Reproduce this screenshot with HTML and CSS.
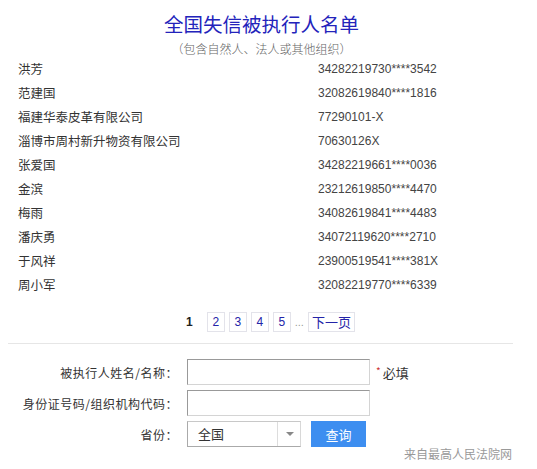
FILE: index.html
```html
<!DOCTYPE html>
<html lang="zh-CN">
<head>
  <meta charset="UTF-8" />
  <title>全国失信被执行人名单</title>
  <link rel="stylesheet" href="styles.css">
</head>
<body>
  <div class="page">
    <h1 class="title">全国失信被执行人名单</h1>
    <div class="subtitle">（包含自然人、法人或其他组织）</div>

    <!-- 名单列表 -->
    <ul class="list">
      <li><span class="name">洪芳</span><span class="code">34282219730****3542</span></li>
      <li><span class="name">范建国</span><span class="code">32082619840****1816</span></li>
      <li><span class="name">福建华泰皮革有限公司</span><span class="code">77290101-X</span></li>
      <li><span class="name">淄博市周村新升物资有限公司</span><span class="code">70630126X</span></li>
      <li><span class="name">张爱国</span><span class="code">34282219661****0036</span></li>
      <li><span class="name">金滨</span><span class="code">23212619850****4470</span></li>
      <li><span class="name">梅雨</span><span class="code">34082619841****4483</span></li>
      <li><span class="name">潘庆勇</span><span class="code">34072119620****2710</span></li>
      <li><span class="name">于风祥</span><span class="code">23900519541****381X</span></li>
      <li><span class="name">周小军</span><span class="code">32082219770****6339</span></li>
    </ul>

    <!-- 分页 -->
    <div class="pager">
      <span class="current">1</span>
      <a href="#" class="page-link">2</a>
      <a href="#" class="page-link">3</a>
      <a href="#" class="page-link">4</a>
      <a href="#" class="page-link">5</a>
      <span class="dots">...</span>
      <a href="#" class="page-link next">下一页</a>
    </div>

    <div class="divider"></div>

    <!-- 查询表单 -->
    <form class="search">
      <div class="row">
        <label class="label">被执行人姓名/名称：</label>
        <input type="text" class="field" />
        <span class="required"><i>*</i>必填</span>
      </div>
      <div class="row">
        <label class="label">身份证号码/组织机构代码：</label>
        <input type="text" class="field" />
      </div>
      <div class="row">
        <label class="label">省份：</label>
        <div class="select">
          <span class="select-value">全国</span>
          <span class="select-arrow"></span>
        </div>
        <button type="button" class="btn">查询</button>
      </div>
    </form>

    <div class="source">来自最高人民法院网</div>
  </div>
</body>
</html>
```

FILE: styles.css
```css
* {
  margin: 0;
  padding: 0;
  box-sizing: border-box;
}

body {
  font-family: "Liberation Sans", "Noto Sans CJK SC", sans-serif;
  background: #fff;
  color: #333;
}

.page {
  width: 537px;
}

.title {
  font-family: "Noto Sans CJK SC", sans-serif;
  font-size: 19.5px;
  font-weight: normal;
  color: #2323bb;
  text-align: center;
  line-height: 24px;
  margin-top: 12px;
  padding-right: 14px;
}

.subtitle {
  font-family: "Noto Sans CJK SC", sans-serif;
  font-size: 12px;
  font-weight: 300;
  color: #666;
  text-align: center;
  line-height: 16px;
  margin-top: 5px;
  padding-right: 14px;
}

.list {
  list-style: none;
}

.list li {
  display: flex;
  height: 24px;
  line-height: 24px;
  font-size: 12.5px;
}

.name {
  font-family: "Noto Sans CJK SC", sans-serif;
  width: 318px;
  padding-left: 18px;
  color: #333;
}

.code {
  font-size: 12px;
  color: #444;
}

.pager {
  display: flex;
  justify-content: center;
  align-items: center;
  gap: 4px;
  margin-top: 15px;
  height: 20px;
  font-size: 12px;
  padding-left: 4px;
}

.current {
  font-weight: bold;
  color: #222;
  margin-right: 10px;
}

.page-link {
  display: inline-block;
  min-width: 18px;
  height: 20px;
  line-height: 18px;
  padding: 0 3px;
  border: 1px solid #e3e3ea;
  color: #2424a8;
  text-decoration: none;
  text-align: center;
}

.next {
  font-family: "Noto Sans CJK SC", sans-serif;
  font-size: 13px;
  padding: 0 3px;
}

.dots {
  color: #999;
  font-size: 11px;
}

.divider {
  height: 1px;
  background: #e6e6e6;
  margin: 11px 24px 0 8px;
}

.search {
  margin-top: 15px;
}

.row {
  display: flex;
  align-items: center;
  margin-bottom: 5px;
}

.label {
  font-family: "Noto Sans CJK SC", sans-serif;
  width: 178px;
  text-align: right;
  font-size: 12px;
  letter-spacing: 0.5px;
  color: #333;
  margin-right: 9px;
}

.field {
  width: 183px;
  height: 26px;
  border: 1px solid;
  border-color: #999 #d4d4d4 #d4d4d4 #999;
  outline: none;
}

.required {
  font-family: "Noto Sans CJK SC", sans-serif;
  font-size: 13px;
  margin-left: 6px;
  color: #333;
}

.required i {
  font-style: normal;
  color: #c33;
  font-size: 10px;
  vertical-align: top;
  margin-right: 2px;
}

.select {
  display: flex;
  width: 114px;
  height: 26px;
  border: 1px solid;
  border-color: #c8c8c8 #d8d8d8 #aaa #aaa;
}

.select-value {
  flex: 1;
  font-family: "Noto Sans CJK SC", sans-serif;
  font-size: 13px;
  line-height: 24px;
  padding-left: 10px;
  border-right: 1px solid #ddd;
}

.select-arrow {
  width: 22px;
  position: relative;
}

.select-arrow::after {
  content: "";
  position: absolute;
  left: 8px;
  top: 10px;
  border-left: 4px solid transparent;
  border-right: 4px solid transparent;
  border-top: 4px solid #888;
}

.btn {
  font-family: "Noto Sans CJK SC", sans-serif;
  width: 55px;
  height: 26px;
  margin-left: 10px;
  background: #3d8ef0;
  color: #fff;
  border: none;
  font-size: 13px;
  cursor: pointer;
}

.source {
  font-family: "Noto Sans CJK SC", sans-serif;
  text-align: right;
  font-size: 12px;
  color: #999;
  padding-right: 25px;
  line-height: 16px;
  margin-top: -6px;
}
```
